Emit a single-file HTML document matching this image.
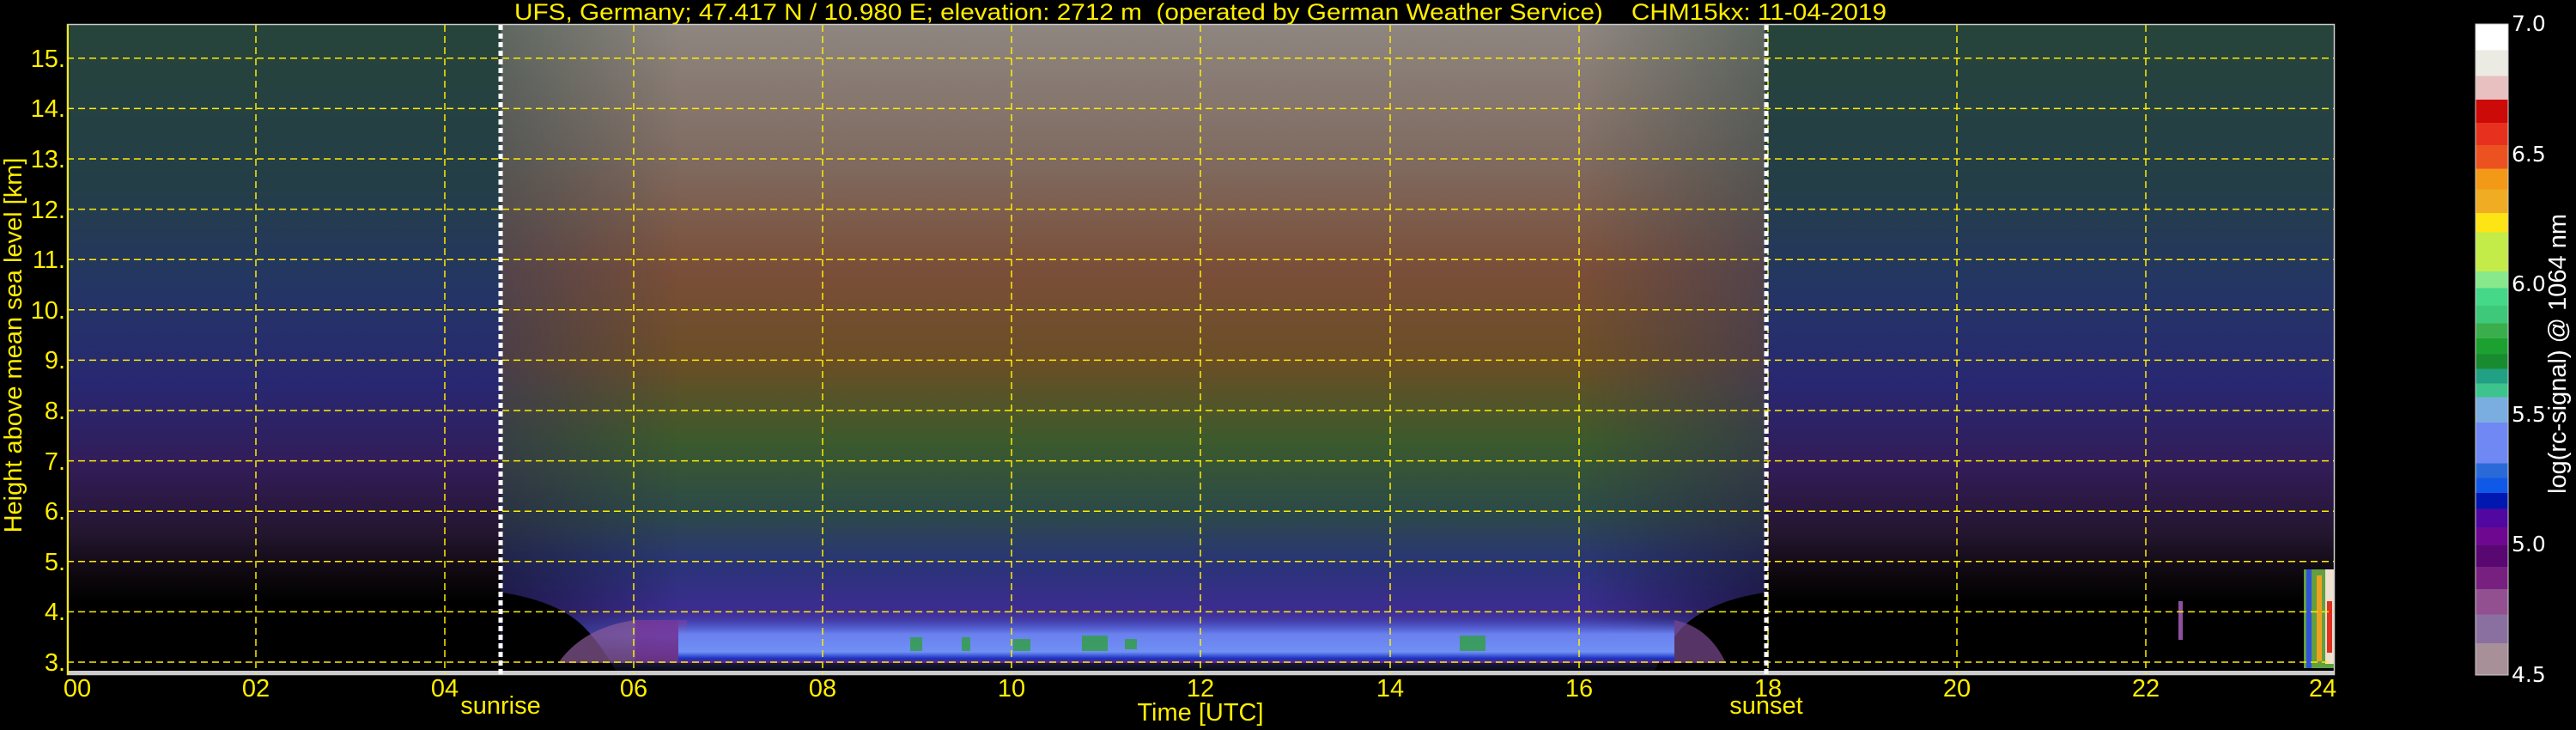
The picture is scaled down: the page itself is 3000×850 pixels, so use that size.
<!DOCTYPE html>
<html><head><meta charset="utf-8"><style>html,body{margin:0;padding:0;background:#000;width:3000px;height:850px;overflow:hidden}</style></head>
<body>
<svg width="3000" height="850" viewBox="0 0 3000 850" xmlns="http://www.w3.org/2000/svg" style="display:block">
<defs>
<linearGradient id="night" x1="0" y1="29" x2="0" y2="786" gradientUnits="userSpaceOnUse">
<stop offset="0" stop-color="#26443a"/>
<stop offset="0.25" stop-color="#243e48"/>
<stop offset="0.40" stop-color="#243664"/>
<stop offset="0.55" stop-color="#282872"/>
<stop offset="0.68" stop-color="#321c58"/>
<stop offset="0.78" stop-color="#241630"/>
<stop offset="0.85" stop-color="#0c070c"/>
<stop offset="0.89" stop-color="#000"/>
<stop offset="1" stop-color="#000"/>
</linearGradient>
<linearGradient id="day" x1="0" y1="29" x2="0" y2="786" gradientUnits="userSpaceOnUse">
<stop offset="0" stop-color="#8e8680"/>
<stop offset="0.2" stop-color="#806c62"/>
<stop offset="0.38" stop-color="#7a4e38"/>
<stop offset="0.52" stop-color="#6a4e26"/>
<stop offset="0.64" stop-color="#3c5a2c"/>
<stop offset="0.75" stop-color="#2c4a48"/>
<stop offset="0.83" stop-color="#2a3478"/>
<stop offset="0.9" stop-color="#3c2c90"/>
<stop offset="0.94" stop-color="#5050c8"/>
<stop offset="1" stop-color="#000"/>
</linearGradient>
<linearGradient id="dmaskg" x1="78" y1="0" x2="2719" y2="0" gradientUnits="userSpaceOnUse">
<stop offset="0.191" stop-color="#000"/>
<stop offset="0.192" stop-color="#fff" stop-opacity="0.55"/>
<stop offset="0.27" stop-color="#fff"/>
<stop offset="0.67" stop-color="#fff"/>
<stop offset="0.748" stop-color="#fff" stop-opacity="0.55"/>
<stop offset="0.749" stop-color="#000"/>
</linearGradient>
<mask id="dmask"><rect x="0" y="0" width="3000" height="850" fill="url(#dmaskg)"/></mask>
<linearGradient id="bl" x1="0" y1="720" x2="0" y2="772" gradientUnits="userSpaceOnUse">
<stop offset="0" stop-color="#4050c0" stop-opacity="0"/>
<stop offset="0.35" stop-color="#6a80ee"/>
<stop offset="0.75" stop-color="#7090f4"/>
<stop offset="0.9" stop-color="#1830c0"/>
<stop offset="1" stop-color="#702080"/>
</linearGradient>
<linearGradient id="cb" x1="0" y1="28" x2="0" y2="786" gradientUnits="userSpaceOnUse">
<stop offset="0" stop-color="#ffffff"/><stop offset="0.040" stop-color="#ffffff"/>
<stop offset="0.040" stop-color="#ebebe4"/><stop offset="0.080" stop-color="#ebebe4"/>
<stop offset="0.080" stop-color="#e8c0c0"/><stop offset="0.116" stop-color="#e8c0c0"/>
<stop offset="0.116" stop-color="#cc0a08"/><stop offset="0.152" stop-color="#cc0a08"/>
<stop offset="0.152" stop-color="#e8301e"/><stop offset="0.186" stop-color="#e8301e"/>
<stop offset="0.186" stop-color="#ec5220"/><stop offset="0.222" stop-color="#ec5220"/>
<stop offset="0.222" stop-color="#f29a18"/><stop offset="0.254" stop-color="#f29a18"/>
<stop offset="0.254" stop-color="#f0ac22"/><stop offset="0.290" stop-color="#f0ac22"/>
<stop offset="0.290" stop-color="#fde414"/><stop offset="0.320" stop-color="#fde414"/>
<stop offset="0.320" stop-color="#c4ec48"/><stop offset="0.380" stop-color="#c4ec48"/>
<stop offset="0.380" stop-color="#88e88c"/><stop offset="0.406" stop-color="#88e88c"/>
<stop offset="0.406" stop-color="#44d888"/><stop offset="0.433" stop-color="#44d888"/>
<stop offset="0.433" stop-color="#3ec87a"/><stop offset="0.460" stop-color="#3ec87a"/>
<stop offset="0.460" stop-color="#3aae4c"/><stop offset="0.483" stop-color="#3aae4c"/>
<stop offset="0.483" stop-color="#1ca030"/><stop offset="0.507" stop-color="#1ca030"/>
<stop offset="0.507" stop-color="#188a30"/><stop offset="0.530" stop-color="#188a30"/>
<stop offset="0.530" stop-color="#22a084"/><stop offset="0.552" stop-color="#22a084"/>
<stop offset="0.552" stop-color="#3cc48c"/><stop offset="0.573" stop-color="#3cc48c"/>
<stop offset="0.573" stop-color="#7aaee0"/><stop offset="0.612" stop-color="#7aaee0"/>
<stop offset="0.612" stop-color="#7088f4"/><stop offset="0.675" stop-color="#7088f4"/>
<stop offset="0.675" stop-color="#2a6ad8"/><stop offset="0.697" stop-color="#2a6ad8"/>
<stop offset="0.697" stop-color="#1058e8"/><stop offset="0.720" stop-color="#1058e8"/>
<stop offset="0.720" stop-color="#0018b0"/><stop offset="0.745" stop-color="#0018b0"/>
<stop offset="0.745" stop-color="#5008a0"/><stop offset="0.773" stop-color="#5008a0"/>
<stop offset="0.773" stop-color="#6e0890"/><stop offset="0.801" stop-color="#6e0890"/>
<stop offset="0.801" stop-color="#580870"/><stop offset="0.834" stop-color="#580870"/>
<stop offset="0.834" stop-color="#782080"/><stop offset="0.868" stop-color="#782080"/>
<stop offset="0.868" stop-color="#925090"/><stop offset="0.907" stop-color="#925090"/>
<stop offset="0.907" stop-color="#8a70a0"/><stop offset="0.951" stop-color="#8a70a0"/>
<stop offset="0.951" stop-color="#a89098"/><stop offset="1" stop-color="#a89098"/>
</linearGradient>
</defs>

<rect x="78" y="29" width="2641" height="757" fill="url(#night)"/>
<rect x="78" y="29" width="2641" height="757" fill="url(#day)" mask="url(#dmask)"/>
<path d="M585 786 L585 690 Q650 700 680 730 Q700 750 720 786 Z" fill="#000"/>
<path d="M2055 786 L2055 690 Q1990 700 1960 730 Q1940 750 1925 786 Z" fill="#000"/>
<path d="M650 772 Q680 730 740 722 L740 772 Z" fill="#8a5a98" opacity="0.7"/>
<rect x="740" y="722" width="60" height="50" fill="#7a3a98" opacity="0.8"/>
<rect x="790" y="720" width="1160" height="52" fill="url(#bl)"/>
<path d="M1950 722 Q1990 730 2010 772 L1950 772 Z" fill="#7a4a90" opacity="0.7"/>
<g fill="#30a040" opacity="0.8">
<rect x="1060" y="742" width="14" height="16"/><rect x="1120" y="742" width="10" height="16"/><rect x="1180" y="744" width="20" height="14"/>
<rect x="1260" y="740" width="30" height="18"/><rect x="1310" y="744" width="14" height="12"/><rect x="1700" y="740" width="30" height="18"/>
</g>
<rect x="2683" y="663" width="36" height="115" fill="#60a040"/>
<rect x="2686" y="663" width="6" height="115" fill="#3050e0"/>
<rect x="2698" y="670" width="6" height="100" fill="#f0a020"/>
<rect x="2708" y="663" width="11" height="110" fill="#f0e0d0"/>
<rect x="2710" y="700" width="6" height="60" fill="#e03020"/>
<rect x="2537" y="700" width="5" height="45" fill="#9050a0"/>
<rect x="78" y="781" width="2641" height="5" fill="#ccc"/>

<g stroke="#ffee00" stroke-width="1.5" stroke-dasharray="8,5" fill="none">
<line x1="78" x2="2719" y1="771" y2="771"/><line x1="78" x2="2719" y1="712.4" y2="712.4"/>
<line x1="78" x2="2719" y1="653.8" y2="653.8"/><line x1="78" x2="2719" y1="595.2" y2="595.2"/>
<line x1="78" x2="2719" y1="536.6" y2="536.6"/><line x1="78" x2="2719" y1="478" y2="478"/>
<line x1="78" x2="2719" y1="419.4" y2="419.4"/><line x1="78" x2="2719" y1="360.8" y2="360.8"/>
<line x1="78" x2="2719" y1="302.2" y2="302.2"/><line x1="78" x2="2719" y1="243.6" y2="243.6"/>
<line x1="78" x2="2719" y1="185" y2="185"/><line x1="78" x2="2719" y1="126.4" y2="126.4"/>
<line x1="78" x2="2719" y1="67.8" y2="67.8"/>
<line y1="29" y2="786" x1="298" x2="298"/><line y1="29" y2="786" x1="518" x2="518"/>
<line y1="29" y2="786" x1="738" x2="738"/><line y1="29" y2="786" x1="958" x2="958"/>
<line y1="29" y2="786" x1="1178" x2="1178"/><line y1="29" y2="786" x1="1398" x2="1398"/>
<line y1="29" y2="786" x1="1619" x2="1619"/><line y1="29" y2="786" x1="1839" x2="1839"/>
<line y1="29" y2="786" x1="2059" x2="2059"/><line y1="29" y2="786" x1="2279" x2="2279"/>
<line y1="29" y2="786" x1="2499" x2="2499"/>
</g>
<g stroke="#fff" stroke-width="5" stroke-dasharray="6,4">
<line x1="583" x2="583" y1="29" y2="786"/><line x1="2057" x2="2057" y1="29" y2="786"/>
</g>
<rect x="78.5" y="28.5" width="2640" height="757" fill="none" stroke="#ccc" stroke-width="1.5"/>
<line x1="79" x2="79" y1="29" y2="786" stroke="#ffee00" stroke-width="2"/>

<g fill="#ffee00" font-family="Liberation Sans, DejaVu Sans, sans-serif">
<text x="599" y="23" font-size="27" textLength="1598" lengthAdjust="spacingAndGlyphs" xml:space="preserve" style="white-space:pre">UFS, Germany; 47.417 N / 10.980 E; elevation: 2712 m  (operated by German Weather Service)    CHM15kx: 11-04-2019</text>
<g font-size="29" text-anchor="end">
<text x="76" y="781">3.</text><text x="76" y="722">4.</text><text x="76" y="664">5.</text>
<text x="76" y="605">6.</text><text x="76" y="547">7.</text><text x="76" y="488">8.</text>
<text x="76" y="429">9.</text><text x="76" y="371">10.</text><text x="76" y="312">11.</text>
<text x="76" y="254">12.</text><text x="76" y="195">13.</text><text x="76" y="136">14.</text>
<text x="76" y="78">15.</text>
</g>
<g font-size="29" text-anchor="middle">
<text x="90" y="811">00</text><text x="298" y="811">02</text><text x="518" y="811">04</text>
<text x="738" y="811">06</text><text x="958" y="811">08</text><text x="1178" y="811">10</text>
<text x="1398" y="811">12</text><text x="1619" y="811">14</text><text x="1839" y="811">16</text>
<text x="2059" y="811">18</text><text x="2279" y="811">20</text><text x="2499" y="811">22</text>
<text x="2705" y="811">24</text>
<text x="583" y="831">sunrise</text><text x="2057" y="831">sunset</text>
<text x="1398" y="839">Time [UTC]</text>
</g>
<text transform="translate(25,402) rotate(-90)" font-size="29" text-anchor="middle">Height above mean sea level [km]</text>
</g>

<rect x="2883" y="28" width="38" height="758" fill="url(#cb)" stroke="#ccc" stroke-width="1"/>
<g fill="#fff" font-family="DejaVu Sans, Liberation Sans, sans-serif" font-size="25">
<text x="2925" y="36">7.0</text><text x="2925" y="188">6.5</text><text x="2925" y="339">6.0</text>
<text x="2925" y="491">5.5</text><text x="2925" y="642">5.0</text><text x="2925" y="794">4.5</text>
<text transform="translate(2988,412) rotate(-90)" font-size="29" text-anchor="middle" font-family="Liberation Sans, sans-serif">log(rc-signal) @ 1064 nm</text>
</g>
</svg>
</body></html>
